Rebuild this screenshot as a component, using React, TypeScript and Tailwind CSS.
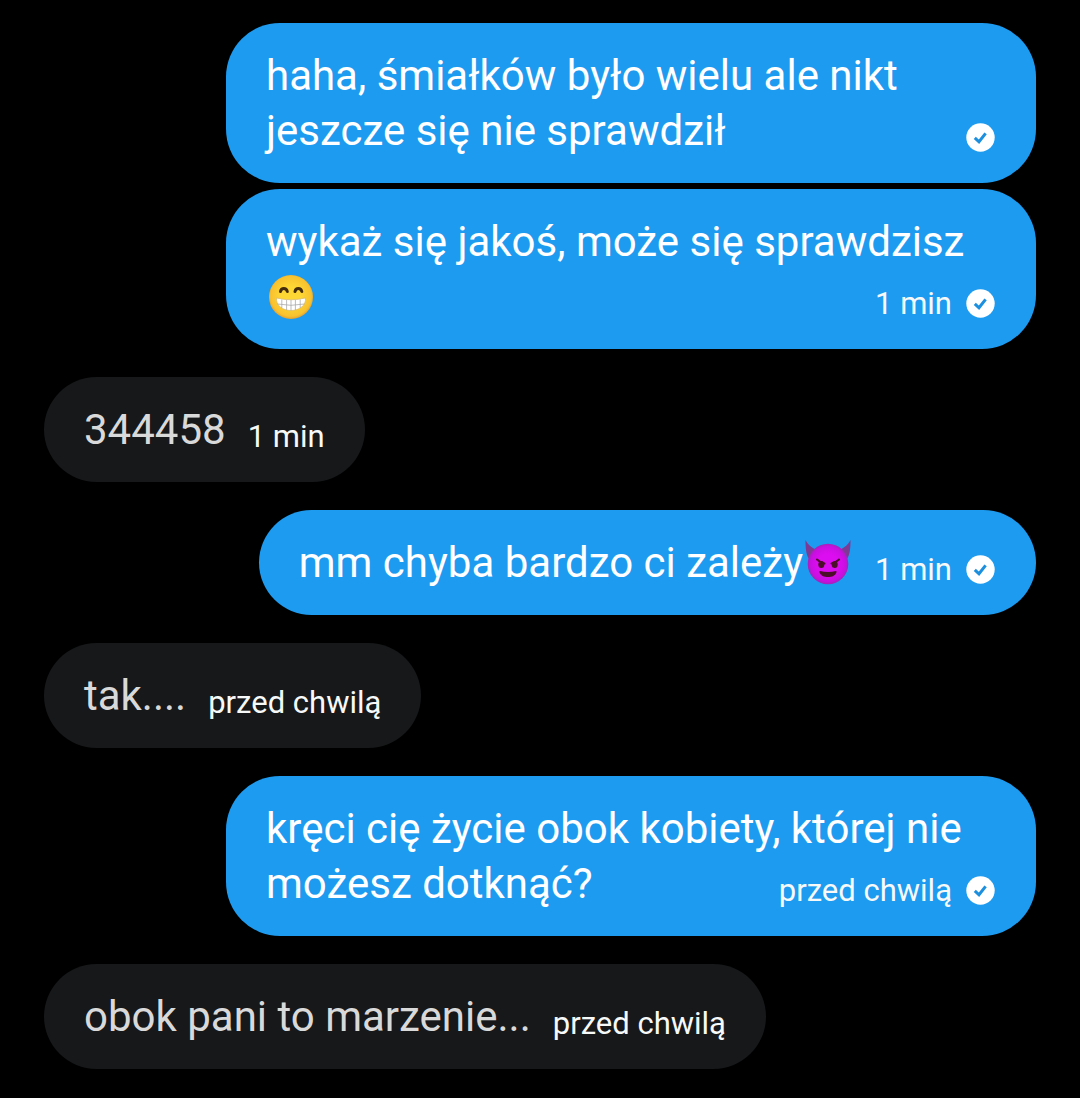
type Emoji = "grin" | "devil";

type Message = {
  id: number;
  own: boolean;
  text: string;
  emoji?: Emoji;
  time?: string;
  groupEnd: boolean;
};

const messages: Message[] = [
  { id: 1, own: true, text: "haha, śmiałków było wielu ale nikt\njeszcze się nie sprawdził", groupEnd: false },
  { id: 2, own: true, text: "wykaż się jakoś, może się sprawdzisz\n", emoji: "grin", time: "1 min", groupEnd: true },
  { id: 3, own: false, text: "344458", time: "1 min", groupEnd: true },
  { id: 4, own: true, text: "mm chyba bardzo ci zależy", emoji: "devil", time: "1 min", groupEnd: true },
  { id: 5, own: false, text: "tak....", time: "przed chwilą", groupEnd: true },
  { id: 6, own: true, text: "kręci cię życie obok kobiety, której nie\nmożesz dotknąć?", time: "przed chwilą", groupEnd: true },
  { id: 7, own: false, text: "obok pani to marzenie...", time: "przed chwilą", groupEnd: true },
];

function SentIcon() {
  return (
    <svg viewBox="0 0 30 30" className="size-[30px] shrink-0" role="img" aria-label="Wysłano">
      <circle cx="14.5" cy="14.5" r="14.2" fill="#fff" />
      <path d="M8.800 14.800l4.200 4 6.600-8.400" fill="none" stroke="#1d8fdf" strokeWidth="3" />
    </svg>
  );
}

function GrinEmoji() {
  return (
    <svg viewBox="0 0 50 50" className="inline-block size-[50px] align-[-11px]" role="img" aria-label="😁">
      <defs>
        <radialGradient id="grin" cx="50%" cy="48%" r="52%">
          <stop offset="0.4" stopColor="#fdd835" />
          <stop offset="0.88" stopColor="#f8c22f" />
          <stop offset="1" stopColor="#e3a02f" />
        </radialGradient>
      </defs>
      <circle cx="25" cy="25" r="22" fill="url(#grin)" />
      <g fill="none" stroke="#422b0d" strokeWidth="3" strokeLinecap="round">
        <path d="M14.500 19.500c.8-4 5.800-4 6.800 0" />
        <path d="M29 19.500c.8-4 5.800-4 6.800 0" />
      </g>
      <path d="M10.500 26q14.500 3.500 29 0c.8 7.500-6.200 12.500-14.500 12.500S9.700 33.500 10.500 26z" fill="#fff" stroke="#d9b765" strokeWidth="0.7" />
      <path d="M11.500 32q13.500 2.600 27 0M20.600 28v10M25 28v10.500M29.400 28v10M15.800 27.500v8.500M34.200 27.500v8.500" fill="none" stroke="#a9aaa9" strokeWidth="0.8" />
    </svg>
  );
}

function DevilEmoji() {
  return (
    <svg viewBox="0 0 50 50" className="inline-block size-[50px] align-[-11px]" role="img" aria-label="😈">
      <defs>
        <radialGradient id="devil" cx="50%" cy="50%" r="51%">
          <stop offset="0.5" stopColor="#dc0df0" />
          <stop offset="0.85" stopColor="#c80fe0" />
          <stop offset="1" stopColor="#9c27b0" />
        </radialGradient>
      </defs>
      <path d="M2.500 2c0 8 .5 14.500 3.500 19l9.500-8.500C9.500 10.500 5.500 7.500 2.500 2zM47.500 2c0 8-.5 14.500-3.500 19l-9.500-8.500c6-2 10-5 13-10.500z" fill="#7d3a94" />
      <circle cx="25" cy="26" r="20.300" fill="url(#devil)" />
      <g fill="#4b0f28">
        <ellipse cx="18.300" cy="26.500" rx="3" ry="3.500" />
        <ellipse cx="31.700" cy="26.500" rx="3" ry="3.500" />
        <path d="M17 33q8 2 16 0c.6 0 .6.800.4 1.400-1 3-4.400 4.600-8.400 4.600s-7.400-1.600-8.400-4.600c-.2-.6-.2-1.400.4-1.400z" />
      </g>
      <path d="M14 21.500q3 3 7.500 4M36 21.500q-3 3-7.500 4" fill="none" stroke="#4b0f28" strokeWidth="2" strokeLinecap="round" />
    </svg>
  );
}

function Bubble({ message }: { message: Message }) {
  const { own, text, emoji, time, groupEnd } = message;

  return (
    <li
      className={`max-w-[810px] rounded-[54px] px-10 py-[25px] ${
        own ? "self-end bg-[#1d9bf0] text-white" : "self-start bg-[#16181a] text-[#d9d9d9]"
      } ${groupEnd ? "mb-7" : "mb-[6px]"} ${text.includes("\n") ? "w-5/6" : ""}`}
    >
      <div className="whitespace-pre-line text-[42px] leading-[55px]">
        {text}
        {emoji === "grin" && <GrinEmoji />}
        {emoji === "devil" && <DevilEmoji />}
        <span className="float-right ml-[22px] flex h-[55px] items-end gap-[14px] pb-[5px] text-[31px] leading-[30px] text-[#f7f9f9]">
          {time && <time>{time}</time>}
          {own && <SentIcon />}
        </span>
      </div>
    </li>
  );
}

export default function App() {
  return (
    <main className="min-h-screen bg-black pt-[23px] font-['Roboto',sans-serif]">
      <ul className="flex flex-col px-11">
        {messages.map((m) => (
          <Bubble key={m.id} message={m} />
        ))}
      </ul>
    </main>
  );
}
